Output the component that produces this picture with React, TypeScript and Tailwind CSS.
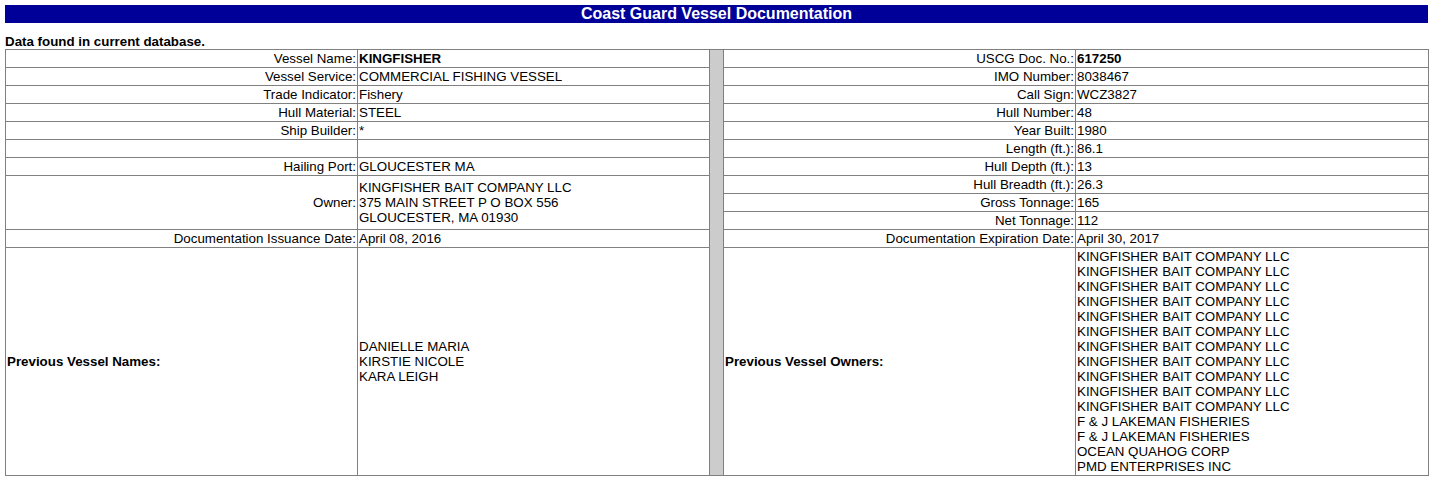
import React from "react";

type Pair = { label: string; value: React.ReactNode; bold?: boolean };

const leftRows: (Pair | null)[] = [
  { label: "Vessel Name:", value: "KINGFISHER", bold: true },
  { label: "Vessel Service:", value: "COMMERCIAL FISHING VESSEL" },
  { label: "Trade Indicator:", value: "Fishery" },
  { label: "Hull Material:", value: "STEEL" },
  { label: "Ship Builder:", value: "*" },
  { label: "", value: "" },
  { label: "Hailing Port:", value: "GLOUCESTER MA" },
];

const rightRows: Pair[] = [
  { label: "USCG Doc. No.:", value: "617250", bold: true },
  { label: "IMO Number:", value: "8038467" },
  { label: "Call Sign:", value: "WCZ3827" },
  { label: "Hull Number:", value: "48" },
  { label: "Year Built:", value: "1980" },
  { label: "Length (ft.):", value: "86.1" },
  { label: "Hull Depth (ft.):", value: "13" },
  { label: "Hull Breadth (ft.):", value: "26.3" },
  { label: "Gross Tonnage:", value: "165" },
  { label: "Net Tonnage:", value: "112" },
  { label: "Documentation Expiration Date:", value: "April 30, 2017" },
];

const prevNames = ["DANIELLE MARIA", "KIRSTIE NICOLE", "KARA LEIGH"];

const prevOwners = [
  ...Array(11).fill("KINGFISHER BAIT COMPANY LLC"),
  "F & J LAKEMAN FISHERIES",
  "F & J LAKEMAN FISHERIES",
  "OCEAN QUAHOG CORP",
  "PMD ENTERPRISES INC",
];

const cell = "border border-[#808080] p-[1px] leading-[15px] align-middle";

function Label({ children, rowSpan }: { children: React.ReactNode; rowSpan?: number }) {
  return (
    <td rowSpan={rowSpan} className={`${cell} text-right`}>
      {children}
    </td>
  );
}

function Value({ children, bold, rowSpan }: { children: React.ReactNode; bold?: boolean; rowSpan?: number }) {
  return (
    <td rowSpan={rowSpan} className={`${cell} text-left ${bold ? "font-bold" : ""}`}>
      {children}
    </td>
  );
}

export default function App() {
  return (
    <div className="bg-white px-[5px] pt-[5px] text-[13.33px] text-black font-['Liberation_Sans',Arial,sans-serif]">
      <div className="bg-[#000099] text-center text-[16px] font-bold leading-[18px] text-white">
        Coast Guard Vessel Documentation
      </div>
      <div className="mt-[11px] font-bold leading-[15px]">Data found in current database.</div>

      <table className="w-[1424px] table-fixed border-collapse">
        <colgroup>
          <col className="w-[352px]" />
          <col className="w-[352px]" />
          <col className="w-[14px]" />
          <col className="w-[352px]" />
          <col className="w-[353px]" />
        </colgroup>
        <tbody>
          {rightRows.map((r, i) => {
            const l = i < leftRows.length ? leftRows[i] : null;
            return (
              <tr key={r.label}>
                {l && (
                  <>
                    <Label>{l.label}</Label>
                    <Value bold={l.bold}>{l.value}</Value>
                  </>
                )}
                {i === 7 && (
                  <>
                    <Label rowSpan={3}>Owner:</Label>
                    <Value rowSpan={3}>
                      KINGFISHER BAIT COMPANY LLC
                      <br />
                      375 MAIN STREET P O BOX 556
                      <br />
                      GLOUCESTER, MA 01930
                    </Value>
                  </>
                )}
                {i === 10 && (
                  <>
                    <Label>Documentation Issuance Date:</Label>
                    <Value>April 08, 2016</Value>
                  </>
                )}
                {i === 0 && <td rowSpan={12} className="border border-[#808080] bg-[#cccccc] p-0" />}
                <Label>{r.label}</Label>
                <Value bold={r.bold}>{r.value}</Value>
              </tr>
            );
          })}
          <tr>
            <td className={`${cell} text-left font-bold`}>Previous Vessel Names:</td>
            <td className={`${cell} text-left`}>
              {prevNames.map((n, i) => (
                <div key={i}>{n}</div>
              ))}
            </td>
            <td className={`${cell} text-left font-bold`}>Previous Vessel Owners:</td>
            <td className={`${cell} text-left`}>
              {prevOwners.map((n, i) => (
                <div key={i}>{n}</div>
              ))}
            </td>
          </tr>
        </tbody>
      </table>
    </div>
  );
}
